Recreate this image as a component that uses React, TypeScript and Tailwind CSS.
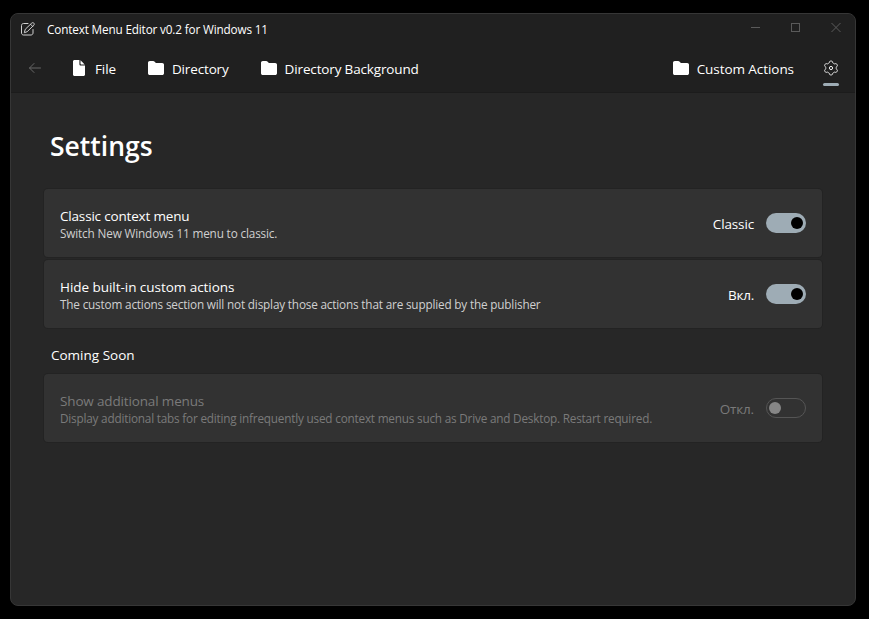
import React from "react";

function FolderIcon() {
  return (
    <svg width="16" height="14" viewBox="0 0 16 14" fill="#fff" className="mb-0.5 shrink-0">
      <path d="M1.8 0H5.2C5.7 0 6.1.2 6.4.5L7.9 1.9H14.2C15.2 1.9 16 2.7 16 3.7V12.2C16 13.2 15.2 14 14.2 14H1.8C.8 14 0 13.2 0 12.2V1.8C0 .8.8 0 1.8 0Z" />
    </svg>
  );
}

function FileIcon() {
  return (
    <svg width="12" height="16" viewBox="0 0 12 16" fill="#fff" className="mb-0.5 shrink-0">
      <path d="M1.5 0H6.4V4.2C6.4 5 7 5.6 7.8 5.6H12V14.5C12 15.3 11.3 16 10.5 16H1.5C.7 16 0 15.3 0 14.5V1.5C0 .7.7 0 1.5 0Z" />
      <path d="M7.5 .3L11.7 4.5H8.2C7.8 4.5 7.5 4.2 7.5 3.8Z" />
    </svg>
  );
}

function EditIcon() {
  return (
    <svg width="14" height="14" viewBox="0 0 14 14" fill="none" stroke="#d0d0d0" strokeWidth="1" strokeLinejoin="round" strokeLinecap="round" className="mb-0.5">
      <path d="M7 1.5H2.5C1.4 1.5 .5 2.4 .5 3.5V11C.5 12.1 1.4 13 2.5 13H10C11.1 13 12 12.1 12 11V7.5" />
      <path d="M10.7 1.1C11.3.5 12.2.5 12.8 1.1C13.4 1.7 13.4 2.6 12.8 3.2L6.2 9.7L3.3 10.7L4.2 7.6Z" />
      <path d="M9.6 2.3L11.7 4.4" />
    </svg>
  );
}

// Outline of a gear with six rounded lobes, one of them pointing straight up.
const gearOutline = Array.from({ length: 120 }, (_, i) => {
  const angle = (i * Math.PI) / 60;
  const radius = 6.1 + 0.85 * Math.tanh(2.2 * Math.cos(6 * angle));
  return `${(8 + radius * Math.sin(angle)).toFixed(2)},${(8 - radius * Math.cos(angle)).toFixed(2)}`;
}).join(" ");

function GearIcon() {
  return (
    <svg width="16" height="16" viewBox="0 0 16 16" fill="none" stroke="#f0f0f0" strokeWidth="1" strokeLinejoin="round">
      <polygon points={gearOutline} />
      <circle cx="8" cy="8" r="1.6" />
    </svg>
  );
}

function NavItem({ icon, label, spacing }: { icon: React.ReactNode; label: string; spacing: string }) {
  return (
    <div className="flex h-5 items-center">
      {icon}
      <span className={`text-[13.5px] leading-5 whitespace-nowrap text-white ${spacing}`}>{label}</span>
    </div>
  );
}

function Toggle({ on }: { on: boolean }) {
  return on ? (
    <div className="flex h-5 w-10 items-center justify-end rounded-full bg-[#9eacb5] pr-[3px]">
      <div className="size-3 rounded-full bg-black" />
    </div>
  ) : (
    <div className="flex h-5 w-10 items-center rounded-full border border-[#555555] pl-[2px]">
      <div className="size-3 rounded-full bg-[#868686]" />
    </div>
  );
}

type CardProps = {
  title: string;
  detail: string;
  state: string;
  on: boolean;
  titleSpacing: string;
  detailSpacing: string;
  stateSpacing: string;
};

function SettingCard({ title, detail, state, on, titleSpacing, detailSpacing, stateSpacing }: CardProps) {
  return (
    <div className="flex h-[68px] items-center justify-between rounded-[4px] bg-[#323232] px-4 shadow-[0_0_0_1px_#232323]">
      <div className={on ? "text-white" : "text-[#7a7a7a]"}>
        <div className={`mt-[2px] h-[18px] text-[13.5px] leading-[19px] whitespace-nowrap ${titleSpacing}`}>{title}</div>
        <div className={`h-4 text-[11.75px] leading-4 whitespace-nowrap ${on ? "text-[#d0d0d0]" : ""} ${detailSpacing}`}>{detail}</div>
      </div>
      <div className="flex items-center gap-3">
        <span className={`pt-0.5 text-[13.5px] leading-5 ${on ? "text-white" : "text-[#7a7a7a]"} ${stateSpacing}`}>{state}</span>
        <Toggle on={on} />
      </div>
    </div>
  );
}

export default function App() {
  return (
    <div className="h-[619px] w-[869px] overflow-hidden bg-black pt-[13px] pl-[10px] font-['Open_Sans','Noto_Sans',sans-serif]">
      <div className="flex h-[593px] w-[846px] flex-col overflow-hidden rounded-[8px] border border-[#363636] bg-[#272727]">
        <header className="h-[79px] shrink-0 border-b border-[#1c1c1c] bg-[#202020]">
          <div className="flex h-8 items-center justify-between pr-[13px] pl-[10px]">
            <div className="flex items-center">
              <EditIcon />
              <span className="mb-0.5 ml-3 text-[11.75px] leading-4 tracking-[-0.16px] whitespace-nowrap text-white">Context Menu Editor v0.2 for Windows 11</span>
            </div>
            <svg width="92" height="12" viewBox="0 0 92 12" fill="none" stroke="#5a5a5a" className="mb-1.5">
              <path d="M1 6.5H10" />
              <rect x="41.5" y="2.5" width="8" height="8" />
              <path d="M81.5 2L90.5 11M90.5 2L81.5 11" />
            </svg>
          </div>
          <nav className="flex h-[46px] items-center justify-between pr-[16px] pl-[18px]">
            <div className="flex items-center">
              <svg width="12" height="10" viewBox="0 0 12 10" fill="none" stroke="#666666" strokeLinecap="round" strokeLinejoin="round" className="mb-0.5">
                <path d="M5 .5L.5 5L5 9.5M.5 5H11.5" />
              </svg>
              <div className="ml-8 flex gap-8">
                <NavItem icon={<FileIcon />} label="File" spacing="ml-[10px] tracking-[-0.1px]" />
                <NavItem icon={<FolderIcon />} label="Directory" spacing="ml-2 tracking-[-0.15px]" />
                <NavItem icon={<FolderIcon />} label="Directory Background" spacing="ml-2 tracking-[-0.15px]" />
              </div>
            </div>
            <div className="flex items-center gap-[29px]">
              <NavItem icon={<FolderIcon />} label="Custom Actions" spacing="ml-2 tracking-[-0.06px]" />
              <div className="flex h-[34px] flex-col items-center justify-between pt-[8px]">
                <GearIcon />
                <div className="h-[3px] w-4 rounded-full bg-[#9eacb5]" />
              </div>
            </div>
          </nav>
        </header>
        <main className="px-[33px]">
          <h1 className="mt-[35px] ml-[6px] h-9 text-[26.5px] leading-9 font-semibold text-white">Settings</h1>
          <section className="mt-[25px] flex flex-col gap-[3px]">
            <SettingCard title="Classic context menu" detail="Switch New Windows 11 menu to classic." state="Classic" on titleSpacing="tracking-[-0.18px]" detailSpacing="tracking-[-0.15px]" stateSpacing="tracking-[-0.14px]" />
            <SettingCard title="Hide built-in custom actions" detail="The custom actions section will not display those actions that are supplied by the publisher" state="Вкл." on titleSpacing="tracking-[-0.04px]" detailSpacing="tracking-[-0.173px]" stateSpacing="tracking-[-0.25px]" />
          </section>
          <h2 className="mt-[17px] ml-[7px] h-5 text-[13.5px] leading-5 text-white">Coming Soon</h2>
          <section className="mt-[9px]">
            <SettingCard title="Show additional menus" detail="Display additional tabs for editing infrequently used context menus such as Drive and Desktop. Restart required." state="Откл." on={false} titleSpacing="tracking-[-0.15px]" detailSpacing="tracking-[-0.2px]" stateSpacing="tracking-[-0.15px]" />
          </section>
        </main>
      </div>
    </div>
  );
}
